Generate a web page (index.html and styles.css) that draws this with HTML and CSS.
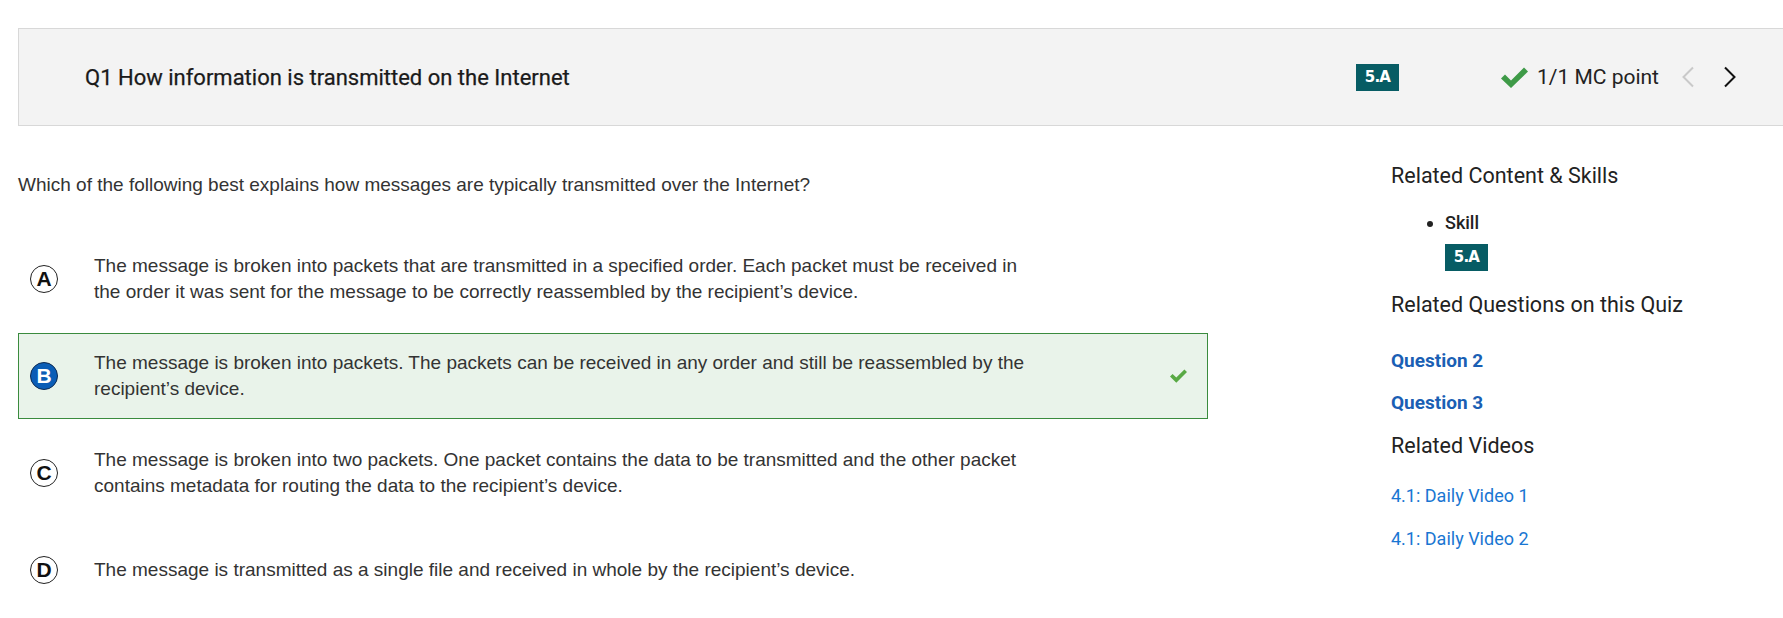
FILE: index.html
```html
<!DOCTYPE html>
<html lang="en">
<head>
<meta charset="utf-8">
<title>Q1 How information is transmitted on the Internet</title>
<link rel="stylesheet" href="styles.css">
</head>
<body>
<div class="page">
  <header class="qhead">
    <h1 class="qtitle">Q1 How information is transmitted on the Internet</h1>
    <span class="badge head-badge">5.A</span>
    <div class="score">
      <svg class="score-check" width="27" height="21" viewBox="0 0 27 21"><path d="M0 11.5 L4 7.5 L10 13.5 L23 0.5 L27 4.5 L10 21 Z" fill="#3e9a47"/></svg>
      <span class="score-text">1/1 MC point</span>
    </div>
    <nav class="qnav">
      <svg class="chev chev-prev" width="14" height="22" viewBox="0 0 14 22"><path d="M12 1.5 L2.5 11 L12 20.5" fill="none" stroke="#c9c9c9" stroke-width="2"/></svg>
      <svg class="chev chev-next" width="14" height="22" viewBox="0 0 14 22"><path d="M2 1.5 L11.5 11 L2 20.5" fill="none" stroke="#111" stroke-width="2"/></svg>
    </nav>
  </header>

  <div class="content">
    <main class="main">
      <p class="prompt">Which of the following best explains how messages are typically transmitted over the Internet?</p>
      <ol class="options">
        <li class="option">
          <span class="letter">A</span>
          <span class="opt-text">The message is broken into packets that are transmitted in a specified order. Each packet must be received in the order it was sent for the message to be correctly reassembled by the recipient’s device.</span>
        </li>
        <li class="option option-correct">
          <span class="letter letter-selected">B</span>
          <span class="opt-text">The message is broken into packets. The packets can be received in any order and still be reassembled by the recipient’s device.</span>
          <svg class="opt-check" width="17" height="14" viewBox="0 0 17 14"><path d="M0 7.5 L2.6 4.9 L6.3 8.6 L14.4 0.5 L17 3.1 L6.3 13.8 Z" fill="#58a944"/></svg>
        </li>
        <li class="option">
          <span class="letter">C</span>
          <span class="opt-text">The message is broken into two packets. One packet contains the data to be transmitted and the other packet contains metadata for routing the data to the recipient’s device.</span>
        </li>
        <li class="option">
          <span class="letter">D</span>
          <span class="opt-text">The message is transmitted as a single file and received in whole by the recipient’s device.</span>
        </li>
      </ol>
    </main>

    <aside class="side">
      <h2 class="side-h">Related Content &amp; Skills</h2>
      <ul class="skills">
        <li class="skill-item">Skill
          <div><span class="badge side-badge">5.A</span></div>
        </li>
      </ul>
      <h2 class="side-h side-h2">Related Questions on this Quiz</h2>
      <a class="qlink" href="#">Question 2</a>
      <a class="qlink" href="#">Question 3</a>
      <h2 class="side-h side-h3">Related Videos</h2>
      <a class="vlink" href="#">4.1: Daily Video 1</a>
      <a class="vlink" href="#">4.1: Daily Video 2</a>
    </aside>
  </div>
</div>
</body>
</html>
```

FILE: styles.css
```css
* { box-sizing: border-box; }
html, body { margin: 0; padding: 0; background: #fff; overflow: hidden; }
body { font-family: Roboto, "Liberation Sans", Arial, sans-serif; color: #212121; }

.page { padding: 28px 0 0 18px; }

.qhead {
  display: flex;
  align-items: center;
  width: 1767px;
  height: 98px;
  background: #f3f3f3;
  border: 1px solid #d8d8d8;
  padding: 0 47px 0 66px;
}
.qtitle {
  flex: 1;
  margin: 0;
  font-size: 22px;
  font-weight: 400;
  color: #1a1a1a;
  -webkit-text-stroke: 0.25px #1a1a1a;
}
.badge {
  display: inline-block;
  background: #075c64;
  color: #fff;
  font-family: "DejaVu Sans", "Liberation Sans", sans-serif;
  font-weight: 700;
  font-size: 15px;
  line-height: 27px;
  height: 27px;
  width: 43px;
  text-align: center;
  letter-spacing: -0.8px;
}
.head-badge { margin-right: 102px; }
.score { display: flex; align-items: center; }
.score-check { margin-right: 9px; }
.score-text { font-size: 21px; color: #222; }
.qnav { display: flex; align-items: center; margin-left: 22px; }
.chev { display: block; }
.chev-next { margin-left: 28px; }

.content { display: flex; align-items: flex-start; }
.main { width: 1190px; flex: none; }
.prompt {
  margin: 47px 0 0 0;
  font-family: "Liberation Sans", Arial, sans-serif;
  font-size: 19px;
  line-height: 24px;
  color: #333;
}
.options {
  list-style: none;
  margin: 39px 0 0 0;
  padding: 0;
  display: flex;
  flex-direction: column;
  gap: 11px;
}
.option {
  display: flex;
  align-items: center;
  min-height: 86px;
  border: 1px solid transparent;
  padding: 0 20px 0 11px;
}
.option-correct { background: #e9f3ea; border-color: #3a8b3e; }
.letter {
  flex: none;
  width: 28px;
  height: 28px;
  border: 1.5px solid #222;
  border-radius: 50%;
  display: flex;
  align-items: center;
  justify-content: center;
  font-family: "Liberation Sans", Arial, sans-serif;
  font-weight: 700;
  font-size: 21px;
  color: #111;
  margin-right: 36px;
}
.letter-selected { background: #0b5db6; color: #fff; border-color: #0d2a52; }
.opt-text {
  width: 940px;
  flex: none;
  font-family: "Liberation Sans", Arial, sans-serif;
  font-size: 19px;
  line-height: 26px;
  color: #333;
}
.opt-check { margin-left: auto; }

.side { margin-left: 183px; padding-top: 37px; }
.side-h {
  margin: 0;
  font-size: 21.5px;
  font-weight: 400;
  line-height: 26px;
  color: #222;
}
.skills { margin: 23px 0 0 0; padding: 0 0 0 54px; font-size: 18px; font-weight: 500; color: #222; line-height: 22px; }
.skill-item { list-style: disc; }
.side-badge { margin-top: 10px; }
.side-h2 { margin-top: 21px; }
.qlink {
  display: block;
  color: #1a5fb4;
  font-size: 19px;
  font-weight: 700;
  text-decoration: none;
  line-height: 22px;
  margin-top: 32px;
}
.qlink + .qlink { margin-top: 20px; }
.side-h3 { margin-top: 19px; }
.vlink {
  display: block;
  color: #1976d2;
  font-size: 18px;
  text-decoration: none;
  line-height: 22px;
  margin-top: 26px;
}
.vlink + .vlink { margin-top: 21px; }
```
